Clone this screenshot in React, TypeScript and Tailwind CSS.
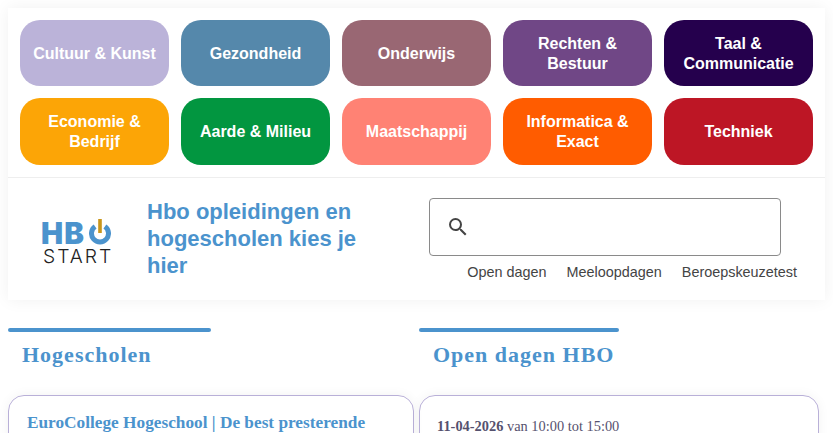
import React from "react";
import { MdSearch } from "react-icons/md";

const categories = [
  { label: "Cultuur & Kunst", color: "bg-[#bbb3d9]" },
  { label: "Gezondheid", color: "bg-[#5588ab]" },
  { label: "Onderwijs", color: "bg-[#996773]" },
  { label: "Rechten & Bestuur", color: "bg-[#704786]" },
  { label: "Taal & Communicatie", color: "bg-[#25004d]" },
  { label: "Economie & Bedrijf", color: "bg-[#fca506]" },
  { label: "Aarde & Milieu", color: "bg-[#029640]" },
  { label: "Maatschappij", color: "bg-[#ff8274]" },
  { label: "Informatica & Exact", color: "bg-[#ff5c00]" },
  { label: "Techniek", color: "bg-[#bd1625]" },
];

const links = ["Open dagen", "Meeloopdagen", "Beroepskeuzetest"];

const Logo = () => (
  <div className="flex w-[70px] flex-col">
    <div className="flex h-[24px] items-center font-['Inter',sans-serif] text-[29.5px] leading-[24px] font-black text-[#4b93cd]">
      <span className="-ml-[2px] w-[48px] shrink-0 tracking-[1.2px]">HB</span>
      <svg width="22" height="26" viewBox="0 0 22 26" className="-mt-[2px] shrink-0 self-start">
        <path d="M6.1 7.5A8.5 8.5 0 1 0 15.9 7.5" fill="none" stroke="#4b93cd" strokeWidth="5" />
        <rect x="9.2" y="0" width="3.6" height="14" fill="#c9961b" />
      </svg>
    </div>
    <div className="mt-px font-['Inter',sans-serif] text-[19.3px] leading-[20px] font-light tracking-[2px] text-[#222]">
      START
    </div>
  </div>
);

const SectionTitle = ({ title, barWidth }: { title: string; barWidth: string }) => (
  <div>
    <div className={`h-1 rounded-sm bg-[#4b93cd] ${barWidth}`} />
    <h2 className="mt-[10px] pl-[14px] font-['Liberation_Serif',serif] text-[22px] leading-[26px] font-bold tracking-[1px] text-[#4b93cd]">
      {title}
    </h2>
  </div>
);

export default function App() {
  return (
    <div className="h-screen overflow-hidden bg-white pt-2">
      {/* Top card */}
      <div className="mx-2 w-[817px] bg-white shadow-[0_0_16px_rgba(0,0,0,0.06)]">
        <div className="grid grid-cols-5 grid-rows-[66px_67px] gap-3 border-b border-[#eeeeee] p-3">
          {categories.map((cat) => (
            <div
              key={cat.label}
              className={`flex items-center justify-center rounded-[20px] px-3 pt-[1.5px] text-center font-['Liberation_Sans',sans-serif] text-base leading-5 font-bold text-white ${cat.color}`}
            >
              {cat.label}
            </div>
          ))}
        </div>

        <div className="flex h-[122px]">
          <div className="mt-[43px] ml-[35px] w-[104px] shrink-0">
            <Logo />
          </div>
          <h1 className="mt-[20px] w-[240px] font-['Liberation_Sans',sans-serif] text-[22px] leading-[27px] font-bold text-[#4b93cd]">
            Hbo opleidingen en hogescholen kies je hier
          </h1>
          <div className="mt-[20px] ml-[42px] w-[368px]">
            <div className="flex h-[58px] w-[352px] items-center rounded border border-[#8a8a8a] pl-[16px]">
              <MdSearch size={24} className="text-[#444444]" />
            </div>
            <div className="mt-[6px] flex justify-end gap-5 font-['Liberation_Sans',sans-serif] text-[14.4px] leading-5 text-[#444444]">
              {links.map((link) => (
                <span key={link}>{link}</span>
              ))}
            </div>
          </div>
        </div>
      </div>

      {/* Columns */}
      <div className="mt-7 ml-2 flex gap-[5px]">
        <div className="w-[406px]">
          <SectionTitle title="Hogescholen" barWidth="w-[203px]" />
          <div className="mt-[27px] h-[100px] rounded-t-[16px] border border-[#b9b0d8] px-[18px] pt-[15px] font-['Liberation_Serif',serif] text-[17.28px] leading-[24px] font-bold text-[#4b93cd] shadow-[0_0_12px_rgba(0,0,0,0.05)]">
            EuroCollege Hogeschool | De best presterende
          </div>
        </div>
        <div className="w-[400px]">
          <SectionTitle title="Open dagen HBO" barWidth="w-[200px]" />
          <div className="mt-[27px] h-[100px] rounded-t-[16px] border border-[#b9b0d8] px-[17px] pt-[20px] font-['Liberation_Serif',serif] text-[14.4px] leading-5 text-[#55516e] shadow-[0_0_12px_rgba(0,0,0,0.05)]">
            <b>11-04-2026</b> van 10:00 tot 15:00
          </div>
        </div>
      </div>
    </div>
  );
}
